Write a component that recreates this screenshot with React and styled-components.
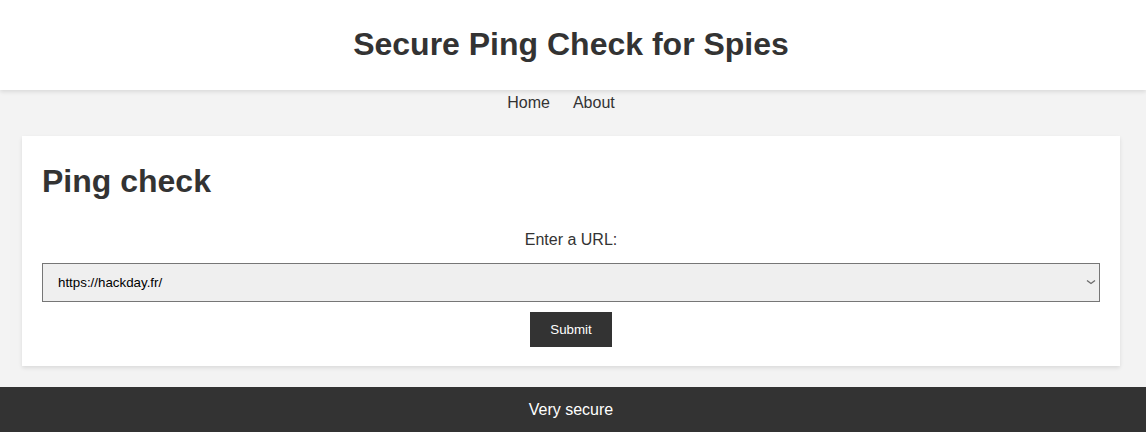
import styled, { createGlobalStyle } from 'styled-components';

const GlobalStyle = createGlobalStyle`
    body {
        margin: 0;
        font-family: "Liberation Sans", Arial, sans-serif;
        background: #f3f3f3;
        color: #333;
    }
`;

const Header = styled.header`
    background: #fff;
    padding: 26px 4px 27px 0;
    text-align: center;
    box-shadow: 0 2px 4px rgba(0, 0, 0, 0.1);

    h1 {
        margin: 0;
        font-size: 32px;
        line-height: 37px;
    }
`;

const Nav = styled.nav`
    display: flex;
    justify-content: center;
    gap: 23px;
    padding: 4px 24px 4px 0;

    a {
        color: #333;
        text-decoration: none;
        font-size: 16px;
    }
`;

const Main = styled.main`
    padding: 20px 26px 21px 22px;
`;

const Card = styled.section`
    background: #fff;
    padding: 27px 20px 19px;
    box-shadow: 0 2px 4px rgba(0, 0, 0, 0.1);

    h2 {
        margin: 0 0 31px;
        font-size: 32px;
        line-height: 37px;
    }
`;

const Form = styled.form`
    display: flex;
    flex-direction: column;
    align-items: center;
`;

const Label = styled.label`
    font-size: 16px;
    line-height: 18px;
    margin-bottom: 14px;
`;

const SelectWrap = styled.div`
    position: relative;
    width: 100%;
    margin-bottom: 10px;

    svg {
        position: absolute;
        right: 2px;
        top: 15px;
        pointer-events: none;
    }
`;

const Select = styled.select`
    display: block;
    width: 100%;
    height: 39px;
    box-sizing: border-box;
    padding: 0 15px;
    font-family: "Liberation Sans", Arial, sans-serif;
    font-size: 13.33px;
    color: #000;
    background: #efefef;
    border: 1px solid #767676;
    border-radius: 0;
    appearance: none;
`;

const Button = styled.button`
    background: #333;
    color: #fff;
    border: none;
    padding: 10px 20px;
    font-family: "Liberation Sans", Arial, sans-serif;
    font-size: 13.33px;
    line-height: 15px;
    cursor: pointer;
`;

const Footer = styled.footer`
    background: #333;
    color: #fff;
    text-align: center;
    padding: 14px 4px 16px 0;
    font-size: 16px;
`;

const Chevron = () => (
    <svg width="14" height="8" viewBox="0 0 14 8" fill="none">
        <path d="M3 2.5 L7 5.5 L11 2.5" stroke="#6b6b6b" strokeWidth="1.3" />
    </svg>
);

const App = () => {
    return (
        <>
            <GlobalStyle />
            <Header>
                <h1>Secure Ping Check for Spies</h1>
            </Header>
            <Nav>
                <a href="#">Home</a>
                <a href="#">About</a>
            </Nav>
            <Main>
                <Card>
                    <h2>Ping check</h2>
                    <Form onSubmit={(e) => e.preventDefault()}>
                        <Label htmlFor="url">Enter a URL:</Label>
                        <SelectWrap>
                            <Select id="url" name="url" defaultValue="https://hackday.fr/">
                                <option value="https://hackday.fr/">https://hackday.fr/</option>
                            </Select>
                            <Chevron />
                        </SelectWrap>
                        <Button type="submit">Submit</Button>
                    </Form>
                </Card>
            </Main>
            <Footer>Very secure</Footer>
        </>
    );
};

export default App;
